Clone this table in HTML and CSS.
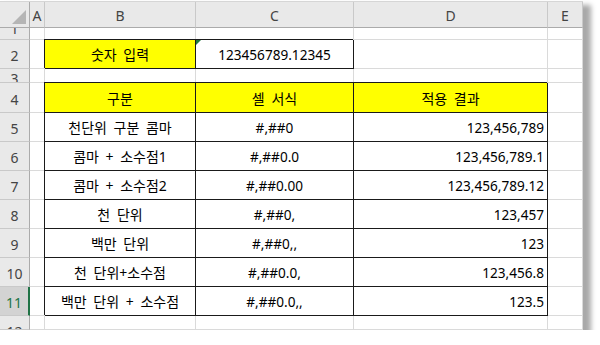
FILE: index.html
```html
<!DOCTYPE html>
<html lang="ko">
<head>
<meta charset="utf-8">
<link rel="stylesheet" href="styles.css">
</head>
<body>
<div class="sheet">
  <div class="hd corner"><svg class="tri" width="14" height="14" viewBox="0 0 14 14"><polygon points="14,0 14,14 0,14" fill="#b5b5b5"/></svg></div>
  <div class="hd col">A</div>
  <div class="hd col">B</div>
  <div class="hd col">C</div>
  <div class="hd col">D</div>
  <div class="hd col">E</div>

  <div class="hd row r-top">1</div>
  <div class="c"></div><div class="c"></div><div class="c"></div><div class="c"></div><div class="c"></div>

  <div class="hd row">2</div>
  <div class="c"></div>
  <div class="c d y ko">숫자 입력</div>
  <div class="c d n flag">123456789.12345</div>
  <div class="c"></div><div class="c"></div>

  <div class="hd row r-mid">3</div>
  <div class="c"></div><div class="c"></div><div class="c"></div><div class="c"></div><div class="c"></div>

  <div class="hd row">4</div>
  <div class="c"></div>
  <div class="c d y ko">구분</div>
  <div class="c d y ko">셀 서식</div>
  <div class="c d y ko">적용 결과</div>
  <div class="c"></div>

  <div class="hd row">5</div>
  <div class="c"></div>
  <div class="c d ko">천단위 구분 콤마</div>
  <div class="c d n">#,##0</div>
  <div class="c d n r">123,456,789</div>
  <div class="c"></div>

  <div class="hd row">6</div>
  <div class="c"></div>
  <div class="c d ko">콤마 + 소수점1</div>
  <div class="c d n">#,##0.0</div>
  <div class="c d n r">123,456,789.1</div>
  <div class="c"></div>

  <div class="hd row">7</div>
  <div class="c"></div>
  <div class="c d ko">콤마 + 소수점2</div>
  <div class="c d n">#,##0.00</div>
  <div class="c d n r">123,456,789.12</div>
  <div class="c"></div>

  <div class="hd row">8</div>
  <div class="c"></div>
  <div class="c d ko">천 단위</div>
  <div class="c d n">#,##0,</div>
  <div class="c d n r">123,457</div>
  <div class="c"></div>

  <div class="hd row">9</div>
  <div class="c"></div>
  <div class="c d ko">백만 단위</div>
  <div class="c d n">#,##0,,</div>
  <div class="c d n r">123</div>
  <div class="c"></div>

  <div class="hd row">10</div>
  <div class="c"></div>
  <div class="c d ko">천 단위+소수점</div>
  <div class="c d n">#,##0.0,</div>
  <div class="c d n r">123,456.8</div>
  <div class="c"></div>

  <div class="hd row sel">11</div>
  <div class="c"></div>
  <div class="c d ko">백만 단위 + 소수점</div>
  <div class="c d n">#,##0.0,,</div>
  <div class="c d n r">123.5</div>
  <div class="c"></div>

  <div class="hd row r-bot">12</div>
  <div class="c"></div><div class="c"></div><div class="c"></div><div class="c"></div><div class="c"></div>
</div>
</body>
</html>
```

FILE: styles.css
```css
html, body {
  margin: 0;
  padding: 0;
  background: #ffffff;
}

body {
  font-family: "Noto Sans", "Noto Sans CJK KR", sans-serif;
  font-size: 14px;
  color: #000;
}

.sheet {
  margin-top: 1px;
  width: 583px;
  height: 329px;
  box-sizing: border-box;
  overflow: hidden;
  display: grid;
  grid-template-columns: 30px 15px 151px 158px 194px 35px;
  grid-template-rows: 26px 12px 29px 14px 30px repeat(7, 29px) 14px;
  background: #fff;
  border-top: 1px solid #d6d6d6;
  box-shadow: 6px 6px 5px 2px #a9a9a9;
}

.hd {
  box-sizing: border-box;
  background: #e9e9e9;
  color: #444;
  font-size: 14px;
  overflow: hidden;
  display: flex;
  justify-content: center;
}

.col {
  align-items: center;
  border-right: 1px solid #c9c9c9;
  border-bottom: 1px solid #ababab;
  padding-top: 1px;
}

.corner {
  border-right: 1px solid #ababab;
  border-bottom: 1px solid #ababab;
  align-items: flex-end;
  justify-content: flex-end;
  padding: 0 3px 3px 0;
}

.tri {
  display: block;
}

.row {
  align-items: flex-end;
  line-height: 19px;
  padding-bottom: 3px;
  border-right: 1px solid #ababab;
  border-bottom: 1px solid #c9c9c9;
}

.row.r-top {
  align-items: flex-end;
  padding-bottom: 1px;
}

.row.r-mid {
  align-items: flex-start;
  padding-bottom: 0;
  padding-top: 0;
}

.row.r-bot {
  align-items: flex-start;
  padding-bottom: 0;
  padding-top: 6px;
}

.row.sel {
  background: #d3d3d3;
  color: #217346;
  border-right: 2px solid #217346;
}

.c {
  box-sizing: border-box;
  background: #fff;
  border-right: 1px solid #dadada;
  border-bottom: 1px solid #dadada;
  display: flex;
  align-items: center;
  justify-content: center;
  white-space: nowrap;
  position: relative;
}

.d {
  border-right-color: #1a1a1a;
  border-bottom-color: #1a1a1a;
  box-shadow: -1px -1px 0 #1a1a1a;
}

.y {
  background: #ffff00;
}

.ko {
  word-spacing: 3px;
}

.n {
  font-size: 13.6px;
}

.r {
  justify-content: flex-end;
  padding-right: 3px;
}

.flag::before {
  content: "";
  position: absolute;
  left: 0;
  top: 0;
  width: 0;
  height: 0;
  border-top: 5px solid #1e7b3e;
  border-right: 5px solid transparent;
}
```
